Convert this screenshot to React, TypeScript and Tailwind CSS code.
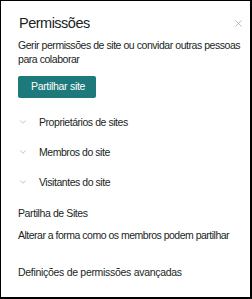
import { X, ChevronDown } from "lucide-react";

const groups = ["Proprietários de sites", "Membros do site", "Visitantes do site"];

export default function App() {
  return (
    <div
      className="w-[252px] h-[299px] bg-white border-t border-l border-r-2 border-b-2 border-black text-[#201f1e] flex flex-col pl-[17px] pr-1"
      style={{ fontFamily: '"Liberation Sans", Arial, sans-serif' }}
    >
      <div className="flex items-center justify-between pt-[12px] h-[32px]">
        <h1 className="text-[14.5px] leading-5 ml-[1px] tracking-[-0.5px]">Permissões</h1>
        <X className="w-[11px] h-[11px] text-[#a19f9d] mr-[2px] mt-[1px]" strokeWidth={1.5} />
      </div>
      <p className="text-[10.5px] leading-[13.5px] mt-[6px] tracking-[-0.45px]">
        Gerir permissões de site ou convidar outras pessoas para colaborar
      </p>
      <button className="mt-[10px] w-[78px] h-[22px] bg-[#1e7a7a] text-white text-[10.5px] rounded-[2px] tracking-[-0.3px] pl-[2px]">
        Partilhar site
      </button>
      <div className="flex flex-col mt-[9px]">
        {groups.map((g) => (
          <div key={g} className="flex items-center h-[30px]">
            <ChevronDown className="w-[10px] h-[10px] text-[#a19f9d]" strokeWidth={1.5} />
            <span className="ml-[11px] text-[10.5px] tracking-[-0.45px] mt-[2px] whitespace-nowrap">{g}</span>
          </div>
        ))}
      </div>
      <div className="mt-[10px] text-[10.5px] tracking-[-0.4px] leading-[13px] whitespace-nowrap">Partilha de Sites</div>
      <div className="mt-[9px] text-[10.5px] tracking-[-0.5px] leading-[13px] whitespace-nowrap">
        Alterar a forma como os membros podem partilhar
      </div>
      <div className="mt-[24px] text-[10.5px] tracking-[-0.3px] leading-[13px] whitespace-nowrap">
        Definições de permissões avançadas
      </div>
    </div>
  );
}
